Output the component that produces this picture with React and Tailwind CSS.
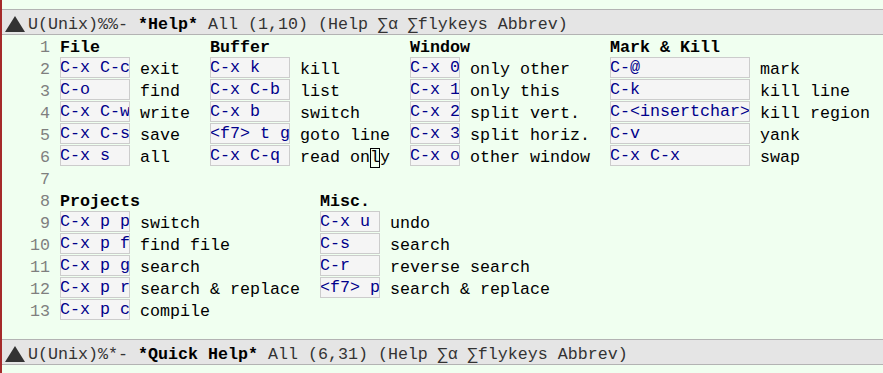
import React from "react";

const font = { fontFamily: '"Liberation Mono", "DejaVu Sans Mono", monospace' };

// each section: heading, width, key box width (px), rows of [key, desc]
const topCols = [
  { title: "File", w: 150, box: 70, rows: [["C-x C-c", "exit"], ["C-o", "find"], ["C-x C-w", "write"], ["C-x C-s", "save"], ["C-x s", "all"]] },
  { title: "Buffer", w: 200, box: 80, rows: [["C-x k", "kill"], ["C-x C-b", "list"], ["C-x b", "switch"], ["<f7> t g", "goto line"], ["C-x C-q", "read only"]] },
  { title: "Window", w: 200, box: 50, rows: [["C-x 0", "only other"], ["C-x 1", "only this"], ["C-x 2", "split vert."], ["C-x 3", "split horiz."], ["C-x o", "other window"]] },
  { title: "Mark & Kill", w: 260, box: 140, rows: [["C-@", "mark"], ["C-k", "kill line"], ["C-<insertchar>", "kill region"], ["C-v", "yank"], ["C-x C-x", "swap"]] },
];

const bottomCols = [
  { title: "Projects", w: 260, box: 70, rows: [["C-x p p", "switch"], ["C-x p f", "find file"], ["C-x p g", "search"], ["C-x p r", "search & replace"], ["C-x p c", "compile"]] },
  { title: "Misc.", w: 260, box: 60, rows: [["C-x u", "undo"], ["C-s", "search"], ["C-r", "reverse search"], ["<f7> p", "search & replace"]] },
];

function Key({ k, w }) {
  return (
    <span
      className="flex h-[21px] items-start border border-[#cccccc] bg-[#f5f5f5] text-[#00008b] whitespace-pre overflow-hidden"
      style={{ width: w }}
    >
      <span className="-ml-px">{k}</span>
    </span>
  );
}

function Desc({ text }) {
  if (text === "read only") {
    return (
      <span className="ml-[10px] pt-[3px] whitespace-pre">
        read on
        <span className="inline-block h-[20px] w-[10px] leading-[20px] shadow-[inset_0_0_0_1px_#000]">l</span>
        y
      </span>
    );
  }
  return <span className="ml-[10px] pt-[3px] whitespace-pre">{text}</span>;
}

function Row({ n, children }) {
  return (
    <div className="flex h-[22px] items-start">
      <span className="w-[60px] pr-[10px] pt-[3px] text-right text-[#7f7f7f]">{n ?? ""}</span>
      {children}
    </div>
  );
}

function Block({ cols, start, count }) {
  const out = [];
  out.push(
    <Row key="h" n={start}>
      {cols.map((c) => (
        <span key={c.title} className="pt-[3px] font-bold" style={{ width: c.w }}>{c.title}</span>
      ))}
    </Row>
  );
  for (let i = 0; i < count; i++) {
    out.push(
      <Row key={i} n={start + 1 + i}>
        {cols.map((c) => (
          <span key={c.title} className="flex h-[22px] items-start" style={{ width: c.w }}>
            {c.rows[i] && (
              <>
                <Key k={c.rows[i][0]} w={c.box} />
                <Desc text={c.rows[i][1]} />
              </>
            )}
          </span>
        ))}
      </Row>
    );
  }
  return out;
}

function ModeLine({ state, name, pos }) {
  return (
    <div className="flex h-[26px] items-center border-y border-[#b3b3b3] bg-[#e5e5e5] pt-[5px] text-[#333333] whitespace-pre">
      <svg className="mb-[2px] ml-[3px] mr-[3px]" width="20" height="16" viewBox="0 0 20 16">
        <polygon points="10,0 20,16 0,16" fill="#333333" />
      </svg>
      <span>{state} </span>
      <span className="font-bold text-black">{name}</span>
      <span> All {pos} (Help ∑α ∑flykeys Abbrev)</span>
    </div>
  );
}

export default function App() {
  return (
    <div
      className="h-[373px] w-[883px] overflow-hidden border-l-2 border-[#a52a2a] bg-[#f0fff0] text-[16.667px] leading-[20px] text-black"
      style={font}
    >
      <div className="h-[9px]" />
      <ModeLine state="U(Unix)%%-" name="*Help*" pos="(1,10)" />
      <div className="-ml-[2px] h-[286px]">
        <Block cols={topCols} start={1} count={5} />
        <Row n={7} />
        <Block cols={bottomCols} start={8} count={5} />
      </div>
      <div className="h-[18px]" />
      <ModeLine state="U(Unix)%*-" name="*Quick Help*" pos="(6,31)" />
    </div>
  );
}
